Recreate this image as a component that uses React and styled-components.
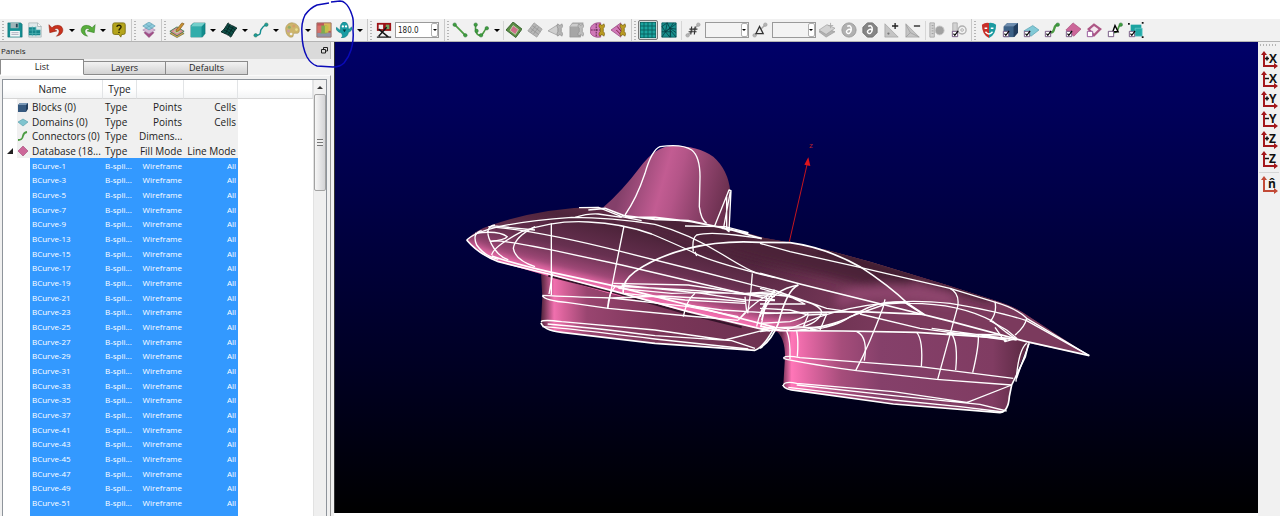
import React from "react";
import styled, { createGlobalStyle } from "styled-components";

const GlobalStyle = createGlobalStyle`
  *, *::before, *::after { box-sizing: border-box; }
  body { margin: 0; background: #fff; font-family: "Open Sans", "Noto Sans", sans-serif; color: #222; }
  button, select { font-family: inherit; margin: 0; }
`;

const Window = styled.div`
  position: relative;
  display: flex;
  flex-direction: column;
  height: 100vh;
  padding-top: 19px;
  overflow: hidden;
`;

const Toolbar = styled.header`
  display: flex;
  flex: none;
  height: 23px;
  background: #f1f1f1;
  border-bottom: 1px solid #b4b4b4;
`;

const Group = styled.div`
  display: flex;
  flex: ${(p) => (p.$width ? `0 0 ${p.$width}px` : "1")};
  align-items: center;
  justify-content: ${(p) => (p.$width ? "space-between" : "flex-start")};
  gap: ${(p) => (p.$width ? 0 : 1)}px;
  padding: 0 ${(p) => p.$end || 2}px 0 2px;
  border-right: ${(p) => (p.$width ? "1px solid #c9c9c9" : "0")};
`;

const Grip = styled.span`
  flex: none;
  width: 2px;
  height: 19px;
  background: repeating-linear-gradient(#b5b5b5 0 1px, #f1f1f1 1px 3px);
`;

const Divider = styled.span`
  flex: none;
  width: 1px;
  height: 19px;
  background: #d6d6d6;
`;

const ToolButton = styled.button`
  display: flex;
  flex: none;
  align-items: center;
  justify-content: center;
  width: 20px;
  height: 20px;
  padding: 0;
  border: 1px solid ${(p) => (p.$active ? "#777" : "transparent")};
  border-radius: 2px;
  background: ${(p) => (p.$active ? "#cfdada" : "none")};
  svg { flex: none; width: 16px; height: 16px; }
`;

const CaretButton = styled.button`
  display: flex;
  flex: none;
  align-items: center;
  justify-content: center;
  width: 10px;
  height: 20px;
  padding: 0;
  border: 0;
  background: none;
`;

const Caret = styled.span`
  border: ${(p) => (p.$small ? 2 : 3)}px solid transparent;
  border-top-color: #000;
  border-bottom: 0;
`;

const Combo = styled.label`
  position: relative;
  display: flex;
  flex: none;
  width: 44px;
  height: 16px;
`;

const ComboSelect = styled.select`
  appearance: none;
  width: 100%;
  padding: 0 0 0 2px;
  border: 1px solid #9a9a9a;
  border-radius: 0;
  background: ${(p) => (p.$filled ? "#fff" : "#f3f3f3")};
  color: #222;
  font-family: "DejaVu Sans Condensed", "DejaVu Sans", sans-serif;
  font-size: 8px;
`;

const ComboArrow = styled.span`
  position: absolute;
  top: 1px;
  right: 1px;
  display: flex;
  align-items: center;
  justify-content: center;
  width: 7px;
  height: 14px;
  border: 1px solid #b0b0b0;
  border-radius: 2px;
  background: #fff;
  pointer-events: none;
`;

const Workspace = styled.div`
  display: flex;
  flex: 1;
  min-height: 0;
`;

const SidePanel = styled.aside`
  display: flex;
  flex: 0 0 334px;
  flex-direction: column;
  padding-right: 3px;
  background: #f0f0f0;
`;

const PanelTitle = styled.div`
  display: flex;
  flex: none;
  align-items: center;
  justify-content: space-between;
  height: 17px;
  padding: 0 2px 0 1px;
  background: #dadada;
  border-right: 1px solid #b8b8b8;
  font-size: 8px;
  color: #222;
`;

const DockButton = styled.button`
  display: flex;
  padding: 0;
  border: 0;
  background: none;
`;

const Tabs = styled.div`
  display: flex;
  flex: none;
  align-items: flex-end;
  height: 16px;
`;

const Tab = styled.button`
  width: ${(p) => (p.$active ? 84 : 82)}px;
  height: ${(p) => (p.$active ? 16 : 14)}px;
  padding: 0;
  border: 1px solid #8b8b8b;
  border-left-width: ${(p) => (p.$active ? 1 : 0)}px;
  border-bottom-color: ${(p) => (p.$active ? "#fff" : "#8b8b8b")};
  background: ${(p) => (p.$active ? "#fff" : "linear-gradient(#f2f2f2, #d2d2d2)")};
  font-size: 9px;
  line-height: 12px;
  color: #222;
`;

const TabPage = styled.div`
  display: flex;
  flex: 1;
  min-height: 0;
  padding: 3px 3px 0 2px;
  border-top: 1px solid #fafafa;
  border-right: 1px solid #989898;
`;

const ListFrame = styled.div`
  display: flex;
  flex: 1;
  min-width: 0;
  overflow: hidden;
  border: 1px solid #8e949b;
  border-bottom: 0;
  background: #fff;
`;

const ListBody = styled.div`
  flex: 1;
  min-width: 0;
  overflow: hidden;
`;

const Tree = styled.table`
  width: 100%;
  table-layout: fixed;
  border-collapse: separate;
  border-spacing: 0;
`;

const HeadCell = styled.th`
  height: 19px;
  padding: 0;
  border-right: 1px solid #e2e4e6;
  border-bottom: 1px solid #d5d5d5;
  background: linear-gradient(#fff 50%, #f3f4f5);
  font-size: 10px;
  font-weight: 400;
  line-height: 18px;
  text-align: center;
`;

const Row = styled.tr`
  height: 15px;
  &:nth-child(3n) { height: 14px; }
`;

const Cell = styled.td`
  height: inherit;
  padding: 0 ${(p) => (p.$align === "right" ? 2 : 0)}px 0 ${(p) => (p.$align === "right" || p.$bare ? 0 : 2)}px;
  overflow: hidden;
  background: ${(p) => (p.$kind === "group" ? "#f0f0f0" : p.$kind === "selected" ? "#3399ff" : "#fff")};
  color: ${(p) => (p.$kind === "selected" ? "#fff" : "#222")};
  font-size: ${(p) => (p.$kind === "selected" ? 8 : 10)}px;
  line-height: 14px;
  text-align: ${(p) => p.$align || "left"};
  white-space: nowrap;
  svg { display: block; }
`;

const ScrollTrack = styled.div`
  display: flex;
  flex: 0 0 13px;
  flex-direction: column;
  border-left: 1px solid #e2e2e2;
  background: #efefef;
`;

const ScrollArrow = styled.button`
  display: flex;
  align-items: center;
  justify-content: center;
  height: 14px;
  padding: 0;
  border: 0;
  background: #f2f2f2;
  &::before {
    content: "";
    border: 3px solid transparent;
    border-top: 0;
    border-bottom-color: #333;
  }
`;

const ScrollThumb = styled.div`
  display: flex;
  align-items: center;
  justify-content: center;
  height: 97px;
  border: 1px solid #a2a2a2;
  border-radius: 2px;
  background: linear-gradient(90deg, #f6f6f6, #d4d4d6);
  &::before {
    content: "";
    width: 6px;
    height: 7px;
    background: repeating-linear-gradient(#777 0 1px, #eee 1px 3px);
  }
`;

const Viewport = styled.main`
  flex: 1;
  min-width: 0;
  margin-bottom: 3px;
  border-left: 1px solid #333;
  background: linear-gradient(#000068, #00004a 30%, #000022 70%, #000);
  svg { display: block; width: 100%; height: 100%; }
`;

const AxisBar = styled.nav`
  display: flex;
  flex: 0 0 22px;
  flex-direction: column;
  align-items: center;
  padding-top: 2px;
  background: #f1f1f1;
`;

const AxisGrip = styled.span`
  width: 18px;
  height: 2px;
  margin-bottom: 4px;
  background: repeating-linear-gradient(90deg, #b5b5b5 0 1px, #f1f1f1 1px 3px);
`;

const AxisDivider = styled.span`
  width: 20px;
  height: 1px;
  margin: 2px 0;
  background: #d6d6d6;
`;

const AxisButton = styled.button`
  width: 20px;
  height: 20px;
  padding: 1px;
  border: 0;
  background: none;
  svg { display: block; width: 18px; height: 18px; }
  text { font: 700 12px "Open Sans", sans-serif; }
`;

const Markup = styled.svg`
  position: absolute;
  top: 0;
  left: 300px;
  width: 56px;
  height: 70px;
  pointer-events: none;
`;

const Node = ({ x, y, c = "#3f9e3f" }) => <circle cx={x} cy={y} r="2" fill={c} stroke={c === "#b5b5b5" ? "#8a8a8a" : "#256b35"} strokeWidth=".5" />;
const Tick = () => (
  <g>
    <path d="M1.500 10.500h6v6h-6z" fill="#fff" stroke="#6a4d7a" />
    <path d="M2.800 13l1.500 2L8 10" fill="none" stroke="#000" strokeWidth="1.300" />
  </g>
);
const Wrench = ({ c }) => (
  <path d="M11 2l1.500 1.500L14 3.500 15.500 2c1.500 2 1 4-.5 5v4c1.500 1 2 3 .5 5l-1.500-1.500h-1.500L11 16c-1.500-2-1-4 .5-5V7C10 6 9.500 4 11 2z" fill={c} stroke={c === "#b99a22" ? "#6d5710" : "#8a8a8a"} strokeWidth=".7" />
);

const icons = {
  save: (
    <>
      <path d="M1 1h14.500l1.500 1.500V17H1z" fill="#168f93" stroke="#0f6d73" strokeWidth=".7" />
      <path d="M4 1h9v6H4z" fill="#9fb4b8" /><path d="M10 2h2v4h-2z" fill="#245" />
      <path d="M3.500 10h11v6.500h-11z" fill="#f4f8f8" /><path d="M5 12h8M5 14h8" stroke="#aab" />
    </>
  ),
  sheet: (
    <>
      <path d="M2 1h10l4 4v12H2z" fill="#dfe8ea" stroke="#9aa8aa" strokeWidth=".7" />
      <path d="M2 6h8v3h5v6H2z" fill="#16858b" /><path d="M6 5v11M10 5v11M2 9h13M2 13h13" stroke="#4fb4b6" strokeWidth=".8" />
      <path d="M12 1v4h4" fill="#fff" stroke="#8a9a9a" strokeWidth=".7" />
    </>
  ),
  undo: <path d="M1 3l1 9 8-2-3-1.500c3-2.500 6-.5 5.500 2.500-.2 2-1.500 3.500-3 5C14.500 15 17.500 11.500 16.500 7.500 15 3 8.500 2.500 4.500 6.500z" fill="#c8321e" stroke="#8f1f10" strokeWidth=".6" />,
  redo: <path d="M17 3l-1 9-8-2 3-1.500C8 6 5 8 5.500 11c.2 2 1.500 3.500 3 5C3.500 15 .5 11.500 1.500 7.500 3 3 9.500 2.500 13.500 6.500z" fill="#58ad3c" stroke="#2f7a20" strokeWidth=".6" />,
  help: (
    <>
      <path d="M4 1h10q2 0 2 2v9q0 2-2 2h-2l-1 3-2-3H4q-2 0-2-2V3q0-2 2-2z" fill="#b5a51c" stroke="#7c7010" />
      <path d="M6.500 5.500C7 2.800 11.500 3 11.300 5.700 11.200 7.500 9 7.500 9 9.500M9 11v1.500" fill="none" stroke="#2b2700" strokeWidth="1.600" />
    </>
  ),
  layers: (
    <>
      <path d="M9 8l5.500 4-5.500 5.500L3.500 12z" fill="#a34d88" stroke="#7f3468" strokeWidth=".6" />
      <path d="M9 5l7 4-7 4.500L2 9z" fill="#d5b8d4" stroke="#9d7ba5" strokeWidth=".6" />
      <path d="M9 0l7 4.500L9 9 2 4.500z" fill="#8dc9da" stroke="#4c8fa5" strokeWidth=".6" />
      <path d="M5.500 2.500l7 4.500M12.500 2.500l-7 4.500" stroke="#5c9fb4" strokeWidth=".6" />
    </>
  ),
  brush: (
    <>
      <path d="M1 13l8-4 8 4-8 4.500z" fill="#e8a04a" stroke="#5c7340" strokeWidth=".8" /><path d="M1 10.500l8-5 8 5-8 5z" fill="#d98b95" stroke="#3b7d52" />
      <path d="M5 10.500l4-2.500 4 2.500-4 2.500z" fill="#b8d8a0" /><path d="M8 9l6.500-8 2.500 1L11 10l-3 1z" fill="#c89132" stroke="#7a5415" strokeWidth=".7" />
    </>
  ),
  cube: (
    <>
      <path d="M1 4l3-3h13v12l-3 4H1z" fill="#138c8d" stroke="#0c6667" strokeWidth=".5" />
      <path d="M1 5h12v12H1z" fill="#32adab" /><path d="M1 5l3-4h13l-4 4z" fill="#74cfcb" />
    </>
  ),
  mesh: (
    <>
      <path d="M8 1c2 3 6 3 10 6-3 2-4 6-7 10-3-3-7-4-11-6 4-2 5-6 8-10z" fill="#0e5048" stroke="#001b19" />
      <path d="M5 6c3 2 7 3 9.500 6M3 9c3 1 6 2 9 6M7 4c3 2 6 2 9 5M10 3L5 13M14 5L8 15" fill="none" stroke="#021f1d" strokeWidth=".8" />
    </>
  ),
  curve: (
    <>
      <path d="M2.500 15c8 0 5-4 6.500-6.500S11.500 4.500 15 3" fill="none" stroke="#168e91" strokeWidth="1.600" />
      <Node x={3} y={15} c="#1b9ba0" /><Node x={15} y={3} c="#1b9ba0" />
    </>
  ),
  palette: (
    <>
      <path d="M2 9C1 4 6 0 10 1c6 1 8 6 7 10-1 3-4 1-6 2-1 1 0 4-2 4-4 1-7-4-7-8z" fill="#cdb56c" stroke="#a28d4d" strokeWidth=".6" />
      <circle cx="6" cy="6" r="1.700" fill="#8fae6a" /><circle cx="11" cy="4.500" r="1.700" fill="#d4a06a" /><circle cx="5" cy="10" r="1.700" fill="#c7a0a4" /><circle cx="8" cy="13.500" r="1.500" fill="#efefef" /><circle cx="14" cy="8.500" r="1.500" fill="#e8df8c" />
    </>
  ),
  colors: (
    <>
      <path d="M1 1h16v16H1z" fill="#c2575a" /><path d="M9 1h8v9H9z" fill="#dcb65a" /><path d="M1 12h16v5H1z" fill="#8e93a8" />
      <path d="M5 4h7v9H5z" fill="#7dab50" /><path d="M1 4h5v8H1z" fill="#d8706a" /><path d="M10 4h4v8h-4z" fill="#c4c04a" />
      <path d="M1 1h16v16H1z" fill="none" stroke="#9c7168" />
    </>
  ),
  ghost: (
    <>
      <path d="M5 9C4 3 7 0 9.500 0S14 3 14 8c2 0 3-3 4-2 .5 3-2 5-4 5.500-.5 3-2 6-8 6.500 2-2 1-4 0-5.500C4 12 0 10 0 6.500 1 5 3 9 5 9z" fill="#1a9da4" stroke="#0e7379" strokeWidth=".6" />
      <circle cx="7.700" cy="5" r="1.300" fill="#fff" /><circle cx="11.300" cy="5" r="1.300" fill="#fff" /><path d="M7.500 8.500h4l-2 3z" fill="#063c42" />
    </>
  ),
  angle: (
    <>
      <path d="M1 1h16v9H1z" fill="#9d1115" /><path d="M3 3h5v5H3z" fill="#eee" /><path d="M11 3h4v5h-4z" fill="#72a45f" />
      <path d="M1 17h16M3 8l11 9M12 6L3 16" stroke="#151515" strokeWidth="1.600" />
    </>
  ),
  line: <><path d="M3 3l12 12" stroke="#4b9b42" strokeWidth="2" /><Node x={3} y={3} /><Node x={15} y={15} /></>,
  arc: <><path d="M3 3c-1 7 1 12 5 12 4-.5 4-5 7-8" fill="none" stroke="#4b9b42" strokeWidth="1.800" /><Node x={3} y={3} /><Node x={9} y={15} /><Node x={4} y={10} /><Node x={15.500} y={7} /></>,
  patch: <><path d="M8 0l10 8-7 9.500L0 9z" fill="#5c8d45" stroke="#2e5d28" /><path d="M8 4l6 4.500-3.500 5.500-6-4.500z" fill="#cf6e8a" stroke="#bdd6ae" /></>,
  patchGray: <><path d="M8 1l9 7-6 9-10-7z" fill="#b6b6b6" stroke="#a0a0a0" /><path d="M4 7l9 7M6 4l9 7M13 6l-6 8M10 4l-6 8" stroke="#929292" strokeWidth=".8" /></>,
  coneWrench: <><path d="M0 10l11-7v12z" fill="#cfcfcf" stroke="#a5a5a5" /><Wrench c="#b4b4b4" /></>,
  cubeWrench: <><path d="M1 5l3-4h12l-3 4v12H1z" fill="#a6a6a6" stroke="#8f8f8f" strokeWidth=".7" /><path d="M1 5h12l3-3H4z" fill="#ccc" /><Wrench c="#bdbdbd" /></>,
  diskWrench: <><path d="M12 1C4 0 0 5 0 9.500S4 18 12 17z" fill="#d078b8" stroke="#923d79" strokeWidth=".8" /><path d="M7 2v14M1 9h10" stroke="#541b45" strokeDasharray="2 1" /><Wrench c="#b99a22" /></>,
  bladeWrench: <><path d="M0 9l11-8v16z" fill="#d078b8" stroke="#923d79" strokeWidth=".8" /><path d="M6 9l5 5M7 5l4 5" stroke="#7a1839" /><Wrench c="#b99a22" /></>,
  grid: <><path d="M0 0h18v18H0z" fill="#1ba39e" stroke="#063e3e" /><path d="M4.500 0v18M9 0v18M13.500 0v18M0 4.500h18M0 9h18M0 13.500h18" stroke="#085d5c" /></>,
  tri: <><path d="M1 1h16v16H1z" fill="#18918e" stroke="#0a5e60" /><path d="M1 5l6-4 3 6 7-5M1 5l4 6 5-4 7 5M5 11l-4 6M5 11l5 6 1-7 6 7M10 7l1 4-6 0M1 11h4l5-4 7 1M7 1l-2 10M14 1l-4 6 1 10" fill="none" stroke="#063f44" strokeWidth=".9" /></>,
  hash: <><path d="M3 15L15 3" stroke="#aaa" strokeWidth="1.500" /><Node x={3} y={15} c="#b5b5b5" /><Node x={15} y={3} c="#b5b5b5" /><path d="M7.500 5l-1 9M11.500 5l-1 9M5 8h9M4 11h9" stroke="#333" strokeWidth="1.300" /></>,
  delta: <><path d="M3 15L15 3" stroke="#aaa" strokeWidth="1.500" /><Node x={3} y={15} c="#b5b5b5" /><Node x={15} y={3} c="#b5b5b5" /><path d="M8.500 5l4 8h-8z" fill="#eee" stroke="#333" strokeWidth="1.500" /></>,
  slab: <><path d="M0 11l8-4 10 4-10 6z" fill="#b3b3b3" stroke="#939393" strokeWidth=".7" /><path d="M0 9l9-6 9 4-10 7z" fill="#d2d2d2" stroke="#989898" strokeWidth=".7" /><path d="M13 1v6M10 4h6" stroke="#aaa" /></>,
  partial: <><circle cx="9" cy="9" r="8" fill="#b1b1b1" stroke="#999" /><path d="M7 5c3-2 5 0 4.500 4S8 14 6.500 12 9 7 11 9" fill="none" stroke="#fff" strokeWidth="1.700" /></>,
  partialDark: <><path d="M6 1h6l5 5v6l-5 5H6l-5-5V6z" fill="#858585" stroke="#6e6e6e" /><path d="M7 5c3-2 5 0 4.500 4S8 14 6.500 12 9 7 11 9" fill="none" stroke="#fff" strokeWidth="1.700" /></>,
  triPlus: <><path d="M1 2v15h15z" fill="#c4c4c4" stroke="#9d9d9d" strokeWidth=".7" /><circle cx="5" cy="13" r="1.300" fill="#777" /><path d="M12.500 1v7M9 4.500h7" stroke="#222" strokeWidth="1.500" /></>,
  triMinus: <><path d="M1 2v15h15z" fill="#c4c4c4" stroke="#9d9d9d" strokeWidth=".7" /><path d="M1 17l5-5 10 5M6 12L1 3" fill="none" stroke="#999" strokeWidth=".8" /><path d="M10 4.500h7" stroke="#222" strokeWidth="1.500" /></>,
  ruler: <><path d="M1 1h5v16H1z" fill="#d2d2d2" stroke="#aaa" /><path d="M3 4h2M3 7h2M3 10h2M3 13h2" stroke="#999" /><circle cx="12" cy="9.500" r="5" fill="#a2a2a2" stroke="#c8c8c8" /></>,
  rulerTick: <><path d="M2 1h5v15H2z" fill="#d2d2d2" stroke="#aaa" /><circle cx="12.500" cy="9" r="4.500" fill="none" stroke="#b0b0b0" strokeWidth="1.500" /><circle cx="12.500" cy="9" r="1.500" fill="none" stroke="#aaa" /><Tick /></>,
  masks: <><path d="M1 3q4-3 8-2v17Q1 14 1 3z" fill="#c8302a" /><path d="M9 1q5-.5 8 2 0 11-8 15z" fill="#1a9aa0" /><path d="M4 7h3M11 7h3M5 11q4 5 8 0" fill="none" stroke="#fff" strokeWidth="1.600" /></>,
  blockTick: <><path d="M2 5l4-4h12v11l-4 5H2z" fill="#223d5e" /><path d="M2 5h11v12H2z" fill="#3d6288" /><path d="M2 5l4-4h12l-5 4z" fill="#6e8dae" /><Tick /></>,
  domainTick: <><path d="M1 10l10-6 7 5-9 7z" fill="#81c9d6" stroke="#5299ab" strokeWidth=".7" /><Tick /></>,
  connTick: <><path d="M7 12c7 0 2-7 8-9" fill="none" stroke="#4b9b42" strokeWidth="2.500" /><Node x={15.500} y={3} /><Tick /></>,
  dbTick: <><path d="M1 9l8-8 9 7-8 8z" fill="#cc6699" stroke="#a14674" strokeWidth=".7" /><Tick /></>,
  boundTick: <><path d="M3 8l6-5 7 5-7 7z" fill="#f3e6ee" stroke="#ad5685" strokeWidth="2.500" /><path d="M1.500 10.500h6v6h-6z" fill="#fff" stroke="#8e4b91" /></>,
  spaceTick: <><path d="M7 12c7 0 4-6 8-9" fill="none" stroke="#4b9b42" strokeWidth="2" /><Node x={15.500} y={3} /><path d="M9 4l3.500 7h-6z" fill="#fff" stroke="#000" strokeWidth="1.600" /><path d="M1.500 10.500h6v6h-6z" fill="#fff" stroke="#6a4d7a" /></>,
  boxTick: <><path d="M3 3h12v12H3z" fill="#1ba3a0" /><path d="M8 7h8v9H8z" fill="#23aaa8" stroke="#75d0ce" strokeWidth=".7" /><path d="M0 1h2v2H0zM15.500 0h2v2h-2zM15.500 16h2v2h-2z" fill="#111" /><Tick /></>,
};

function Tool({ icon, label, active, menu }) {
  return (
    <>
      <ToolButton type="button" aria-label={label} $active={active}>
        <svg viewBox="0 0 18 18" aria-hidden="true">{icons[icon]}</svg>
      </ToolButton>
      {menu && <CaretButton type="button" aria-label={`${label} options`}><Caret /></CaretButton>}
    </>
  );
}

function ComboBox({ label, value }) {
  return (
    <Combo>
      <ComboSelect aria-label={label} $filled={!!value}><option>{value}</option></ComboSelect>
      <ComboArrow><Caret $small /></ComboArrow>
    </Combo>
  );
}

function AxisView({ name }) {
  const normal = name === "n̂";
  const c = normal ? "#c24a36" : "#a3171b";
  return (
    <AxisButton type="button" aria-label={`View ${name}`}>
      <svg viewBox="0 0 18 18" aria-hidden="true">
        <path d="M4 3v12h12" fill="none" stroke={c} strokeWidth="2" />
        <path d="M4 0l3 4H1zM18 15l-4-3v6z" fill={c} />
        {normal ? (
          <text x="8" y="12" fill="#111">n̂</text>
        ) : (
          <>
            <path d={name[0] === "+" ? "M5 7.500h4M7 5.500v4" : "M5 7.500h4"} stroke="#111" strokeWidth="1.500" />
            <text x="9" y="12" fill="#111">{name[1]}</text>
          </>
        )}
      </svg>
    </AxisButton>
  );
}

const treeIcons = {
  block: <><path d="M1 4l2-2h8v6l-2 3H1z" fill="#213c5c" /><path d="M1 4h8v7H1z" fill="#36597f" /><path d="M1 4l2-2h8L9 4z" fill="#7896b5" /></>,
  domain: <path d="M1 6l5-3 5 3-5 4z" fill="#80c4cf" stroke="#509aa8" strokeWidth=".6" />,
  connector: <path d="M1 10c8 0 2-7 9-8" fill="none" stroke="#4b9b42" strokeWidth="1.800" />,
  database: <path d="M6 1l5 5-5 5-5-5z" fill="#cc6699" stroke="#9f4875" strokeWidth=".6" />,
};

const groups = [
  ["block", "Blocks (0)", "Points", "Cells"],
  ["domain", "Domains (0)", "Points", "Cells"],
  ["connector", "Connectors (0)", "Dimens...", ""],
  ["database", "Database (18...", "Fill Mode", "Line Mode"],
];
const curves = [1, 3, 5, 7, 9, 13, 15, 17, 19, 21, 23, 25, 27, 29, 31, 33, 35, 37, 41, 43, 45, 47, 49, 51];

function EntityTree() {
  return (
    <Tree>
      <colgroup>
        {[14, 13, 73, 34, 47, 54].map((w, i) => <col key={i} width={w} />)}
        <col />
      </colgroup>
      <thead>
        <tr><HeadCell colSpan={3}>Name</HeadCell><HeadCell>Type</HeadCell><HeadCell /><HeadCell /><HeadCell /></tr>
      </thead>
      <tbody>
        {groups.map(([icon, name, a, b]) => (
          <Row key={name}>
            <Cell $bare>
              {icon === "database" && <svg width="13" height="12" viewBox="0 0 13 12"><path d="M10 3v6H4z" fill="#222" /></svg>}
            </Cell>
            <Cell $bare $kind="group"><svg width="12" height="12" viewBox="0 0 12 12">{treeIcons[icon]}</svg></Cell>
            <Cell $kind="group">{name}</Cell>
            <Cell $kind="group">Type</Cell>
            <Cell $kind="group" $align={b ? "right" : undefined}>{a}</Cell>
            <Cell $kind="group" $align="right">{b}</Cell>
            <Cell />
          </Row>
        ))}
        {curves.map((n) => (
          <Row key={n}>
            <Cell $bare /><Cell $bare />
            <Cell $kind="selected">BCurve-{n}</Cell>
            <Cell $kind="selected">B-spli...</Cell>
            <Cell $kind="selected" $align="right">Wireframe</Cell>
            <Cell $kind="selected" $align="right">All</Cell>
            <Cell />
          </Row>
        ))}
        <Row><Cell $bare /><Cell $bare /><Cell $kind="selected" colSpan={4} /><Cell /></Row>
      </tbody>
    </Tree>
  );
}

const hull = "M35 330Q60 300 110 285Q250 235 430 230L600 255Q780 278 920 322Q1010 338 1115 360L1245 395L1475 465L1615 510Q1680 530 1715 555L1902 677L1725 640L1640 625L1180 604L945 604L700 545L470 492L130 395Q80 380 35 330Z";

const frontCurves = [
  "M510 255Q545 205 570 130Q590 60 615 50Q680 40 710 60Q735 80 735 140L733 230Q738 270 755 280",
  "M778 290L822 180L828 182L822 305L806 292L826 185M815 200V300M800 295L830 300",
  "M35 330Q90 280 350 262Q470 262 600 283Q700 310 800 372T915 430",
  "M110 375Q115 350 200 305Q300 270 400 276Q500 280 590 312Q680 350 720 370Q760 392 915 432L960 443",
  "M100 290Q240 300 500 365L720 420L960 482",
  "M105 335Q120 325 300 362L500 405L870 492L960 510",
  "M80 302Q50 310 65 345Q90 380 130 388M120 285Q90 290 102 325Q120 375 160 390M110 287L240 300M60 310Q130 300 157 320Q150 330 105 335",
  "M240 290Q180 320 175 355Q180 390 240 410M289 280V495M293 430L282 492M507 288Q480 420 458 535",
  "M360 262Q400 250 430 252L500 262M372 233L430 232Q450 240 500 260L560 272M715 365Q710 325 725 315Q760 305 840 315L920 325M720 365L725 378M690 288L810 290L880 308",
  "M262 496Q340 500 470 504L620 498L780 507L870 515M262 497Q270 512 340 518L460 535L700 558L850 571M470 504L700 530L850 560",
  "M475 460L700 465L870 490L960 485M475 468L700 480L960 500M490 475L650 490L720 488L960 492M510 490L690 510L870 520M500 465L740 490L870 510L960 512",
  "M892 430L888 480L878 550M720 490Q695 510 685 560M458 535Q460 490 480 470M960 485Q900 510 850 570M955 490Q920 520 905 590M935 500L918 590M870 500L875 545L850 570M690 525L800 540L960 550",
  "M258 575Q265 568 320 575L600 600L810 630L960 592M278 582Q400 592 600 617L830 632L900 655M262 590Q290 590 600 627L880 657",
];
const boldFront = [
  "M35 330Q70 372 130 395L280 432L480 484L700 545L945 603",
  "M110 378Q180 402 280 425L470 466L740 535L960 592",
  "M505 490Q500 455 540 425Q600 382 700 355Q800 330 915 337L1005 338Q1110 352 1215 410Q1300 465 1360 522L1410 555",
  "M400 240L450 235L520 262L600 262L710 275L820 297L920 326M500 256L600 268L700 272L880 310",
  "M258 578Q265 600 320 607L600 640L900 661Q925 652 955 598",
];
const rearCurves = [
  "M0 340L90 365L290 410L570 475L700 515Q770 535 800 565L985 675",
  "M988 677L800 572Q720 545 570 520Q450 508 370 520Q270 530 180 560L80 600",
  "M100 602Q230 590 300 545Q370 505 450 520Q600 520 700 575Q740 610 770 628M570 475Q600 490 593 530Q560 650 533 748M705 515Q712 550 690 575M800 565Q795 590 765 615",
  "M375 508L370 530Q330 640 287 722M300 552L480 595L740 630M150 600Q230 590 270 560L370 525M690 572L740 600L770 625L735 635L705 592",
  "M290 605Q325 620 313 692M470 607Q490 630 484 710M575 612Q595 640 587 720M655 615Q657 650 638 728M80 603Q92 630 90 688M110 603Q116 630 112 680",
  "M70 683Q80 675 120 683L480 710L760 745M70 685Q100 695 290 722L530 748L755 765M515 595L750 627M560 610L720 615",
  "M70 765Q75 753 110 760L400 785L625 818M620 818L755 765M110 765L400 797L660 823L740 843M85 772L400 810L600 830L730 846",
  "M800 640Q775 660 768 755M808 640Q785 700 770 745M0 475L120 510Q180 525 185 545Q180 575 130 590M0 490L90 500L135 522H0M40 480L200 535L300 550M0 535L90 540L145 555L130 590L0 595",
  "M115 465Q30 480 0 560M70 480Q20 500 5 570M145 555L200 552L180 600M0 580L90 575Q130 565 145 550M0 605L80 595L200 590L240 575",
];
const boldRear = [
  "M0 430L120 462L375 525L575 575L800 635L988 677",
  "M0 550L300 545L490 553L435 518L370 522",
  "M0 588L60 602L250 603L470 607L740 625L770 630M115 465Q80 480 55 580Q35 630 0 655",
  "M68 765Q75 780 110 782L400 822L720 848Q745 845 748 800L755 765L796 680L806 640",
];

function Curves({ paths, width }) {
  return <g fill="none" stroke="#fff" strokeWidth={width} strokeLinejoin="round">{paths.map((d) => <path key={d} d={d} />)}</g>;
}

function Model() {
  return (
    <svg viewBox="335 42 923 471" role="img" aria-label="Surface model with wireframe curves">
      <defs>
        <linearGradient id="canopy" gradientUnits="userSpaceOnUse" x1="510" y1="130" x2="830" y2="220">
          <stop offset="0" stopColor="#84406a" /><stop offset=".35" stopColor="#c25c92" /><stop offset=".48" stopColor="#b45588" /><stop offset=".7" stopColor="#8e426b" /><stop offset="1" stopColor="#632c49" />
        </linearGradient>
        <linearGradient id="hull" gradientUnits="userSpaceOnUse" x1="620" y1="240" x2="555" y2="510">
          <stop offset="0" stopColor="#6b3150" /><stop offset=".3" stopColor="#4e243b" /><stop offset=".62" stopColor="#673050" /><stop offset=".84" stopColor="#9e4876" /><stop offset="1" stopColor="#f06dac" />
        </linearGradient>
        <linearGradient id="hullRear" gradientUnits="userSpaceOnUse" x1="900" y1="0" x2="1300" y2="0">
          <stop offset="0" stopColor="#6a3150" stopOpacity="0" /><stop offset=".5" stopColor="#6e3352" /><stop offset="1" stopColor="#7b3a5d" />
        </linearGradient>
        <linearGradient id="podFront" gradientUnits="userSpaceOnUse" x1="255" y1="0" x2="960" y2="0">
          <stop offset="0" stopColor="#431c31" /><stop offset=".06" stopColor="#f070ae" /><stop offset=".1" stopColor="#d8629a" /><stop offset=".2" stopColor="#994570" /><stop offset=".5" stopColor="#7b3659" /><stop offset="1" stopColor="#6c3150" />
        </linearGradient>
        <linearGradient id="podRear" gradientUnits="userSpaceOnUse" x1="65" y1="0" x2="810" y2="0">
          <stop offset="0" stopColor="#6b2d4e" /><stop offset=".04" stopColor="#ff76b8" /><stop offset=".1" stopColor="#e568a5" /><stop offset=".24" stopColor="#a64d7b" /><stop offset=".4" stopColor="#85406a" /><stop offset=".85" stopColor="#803c62" /><stop offset="1" stopColor="#57273f" />
        </linearGradient>
        <filter id="soft" filterUnits="userSpaceOnUse" x="-50" y="100" width="2050" height="650"><feGaussianBlur stdDeviation="14" /></filter>
        <clipPath id="hullClip"><path d={hull} /></clipPath>
      </defs>
      <g transform="translate(455 130) scale(.33333)">
        <path d="M258 430L262 500L258 575Q265 600 320 607L600 640L900 661Q925 650 955 598L860 500Z" fill="url(#podFront)" />
        <g transform="translate(915 0)">
          <path d="M45 600Q75 620 75 680L70 765Q75 780 110 782L400 822L720 848Q745 845 748 800L755 765L806 640L700 560L200 560Z" fill="url(#podRear)" />
        </g>
        <path d={hull} fill="url(#hull)" />
        <path d={hull} fill="url(#hullRear)" />
        <g clipPath="url(#hullClip)" fill="none" strokeLinecap="round" filter="url(#soft)">
          <path d="M620 262L920 350L1180 412L1330 450" stroke="#4b2238" strokeWidth="84" />
          <path d="M1100 355L1480 465L1600 500" stroke="#3d1b2d" strokeWidth="30" />
          <path d="M1160 510Q1270 460 1480 505" stroke="#914670" strokeWidth="36" />
          <path d="M40 350L130 390L460 478L940 600" stroke="#ff75b8" strokeWidth="20" />
          <path d="M930 582H1040" stroke="#ff75b8" strokeWidth="18" />
        </g>
        <path d="M445 232Q500 185 555 112Q600 50 650 47Q730 47 775 80Q820 120 826 185L822 300L700 275L520 262Z" fill="url(#canopy)" />
        <path d="M280 437L480 488L700 552L860 592" fill="none" stroke="#35142a" strokeWidth="6" />
        <Curves paths={frontCurves} width={4} />
        <Curves paths={boldFront} width={5} />
        <g transform="translate(915 0)">
          <Curves paths={rearCurves} width={4} />
          <Curves paths={boldRear} width={5} />
          <path d="M88 335L142 100" stroke="#c4161f" strokeWidth="3" />
          <path d="M145 82L151 108L133 104Z" fill="#e0141c" />
        </g>
      </g>
      <text x="809" y="148" fill="#b3202c" fontSize="8" fontFamily="Liberation Sans, sans-serif">z</text>
    </svg>
  );
}

const LeadIn = styled.span`
  flex: none;
  width: 1px;
`;

export default function App() {
  return (
    <Window>
      <GlobalStyle />
      <Toolbar>
        <Group $width={132}>
          <Grip /><Tool icon="save" label="Save" /><Tool icon="sheet" label="Export grid" /><Tool icon="undo" label="Undo" menu /><Tool icon="redo" label="Redo" menu /><Tool icon="help" label="Help" />
        </Group>
        <Group $width={30}><Grip /><Tool icon="layers" label="Layers" /></Group>
        <Group $width={206}>
          <Grip /><Tool icon="brush" label="Attributes" /><Tool icon="cube" label="Blocks" menu /><Tool icon="mesh" label="Domains" menu /><Tool icon="curve" label="Connectors" menu /><Tool icon="palette" label="Color" menu /><Tool icon="colors" label="Fill colors" /><Tool icon="ghost" label="Ghost" menu />
        </Group>
        <Group $width={77} $end={5}><Grip /><Tool icon="angle" label="Split angle" /><ComboBox label="Angle" value="180.0" /></Group>
        <Group $width={187}>
          <Grip /><Tool icon="line" label="Two point curve" /><Tool icon="arc" label="Curve" menu /><Divider />
          <Tool icon="patch" label="Patch" /><Tool icon="patchGray" label="Assemble" /><Tool icon="coneWrench" label="Extrude" /><Tool icon="cubeWrench" label="Block tools" /><Tool icon="diskWrench" label="Revolve" /><Tool icon="bladeWrench" label="Blade" />
        </Group>
        <Group $width={340}>
          <Grip /><Tool icon="grid" label="Structured" active /><Tool icon="tri" label="Unstructured" /><Divider />
          <Tool icon="hash" label="Dimension" /><ComboBox label="Dimension value" value="" /><Tool icon="delta" label="Spacing" /><ComboBox label="Spacing value" value="" />
          <Tool icon="slab" label="Initialize" /><Tool icon="partial" label="Solve" /><Tool icon="partialDark" label="Stop" /><Tool icon="triPlus" label="Refine" /><Tool icon="triMinus" label="Coarsen" /><Divider />
          <Tool icon="ruler" label="Examine" /><Tool icon="rulerTick" label="Examine options" />
        </Group>
        <Group>
          <Grip /><LeadIn />
          <Tool icon="masks" label="Masks" /><Tool icon="blockTick" label="Show blocks" /><Tool icon="domainTick" label="Show domains" /><Tool icon="connTick" label="Show connectors" /><Tool icon="dbTick" label="Show database" /><Tool icon="boundTick" label="Show boundaries" /><Tool icon="spaceTick" label="Show spacing" /><Tool icon="boxTick" label="Show boxes" />
        </Group>
      </Toolbar>
      <Workspace>
        <SidePanel>
          <PanelTitle>
            Panels
            <DockButton type="button" aria-label="Float panel">
              <svg width="7" height="7" viewBox="0 0 7 7"><path d="M2.500 2V.5h4v3.500H5M.5 2.500h4v3.500h-4z" fill="none" stroke="#222" /></svg>
            </DockButton>
          </PanelTitle>
          <Tabs role="tablist">
            <Tab type="button" role="tab" aria-selected="true" $active>List</Tab>
            <Tab type="button" role="tab">Layers</Tab>
            <Tab type="button" role="tab">Defaults</Tab>
          </Tabs>
          <TabPage>
            <ListFrame>
              <ListBody><EntityTree /></ListBody>
              <ScrollTrack><ScrollArrow type="button" aria-label="Scroll up" /><ScrollThumb /></ScrollTrack>
            </ListFrame>
          </TabPage>
        </SidePanel>
        <Viewport><Model /></Viewport>
        <AxisBar aria-label="Views">
          <AxisGrip />
          {["+X", "-X", "+Y", "-Y", "+Z", "-Z"].map((n) => <AxisView key={n} name={n} />)}
          <AxisDivider />
          <AxisView name="n̂" />
        </AxisBar>
      </Workspace>
      <Markup viewBox="300 0 56 70" aria-hidden="true">
        <path d="M329 3L317 5Q310 8 305 15Q301 23 302 34Q302 47 307 57Q311 64 317 66L333 67Q340 67 344 63Q349 57 351 50Q354 40 353 30Q354 20 352 15Q349 6 345 3Q343 1 340 1L331 2" fill="none" stroke="#0a0ab8" strokeWidth="1.500" />
      </Markup>
    </Window>
  );
}
